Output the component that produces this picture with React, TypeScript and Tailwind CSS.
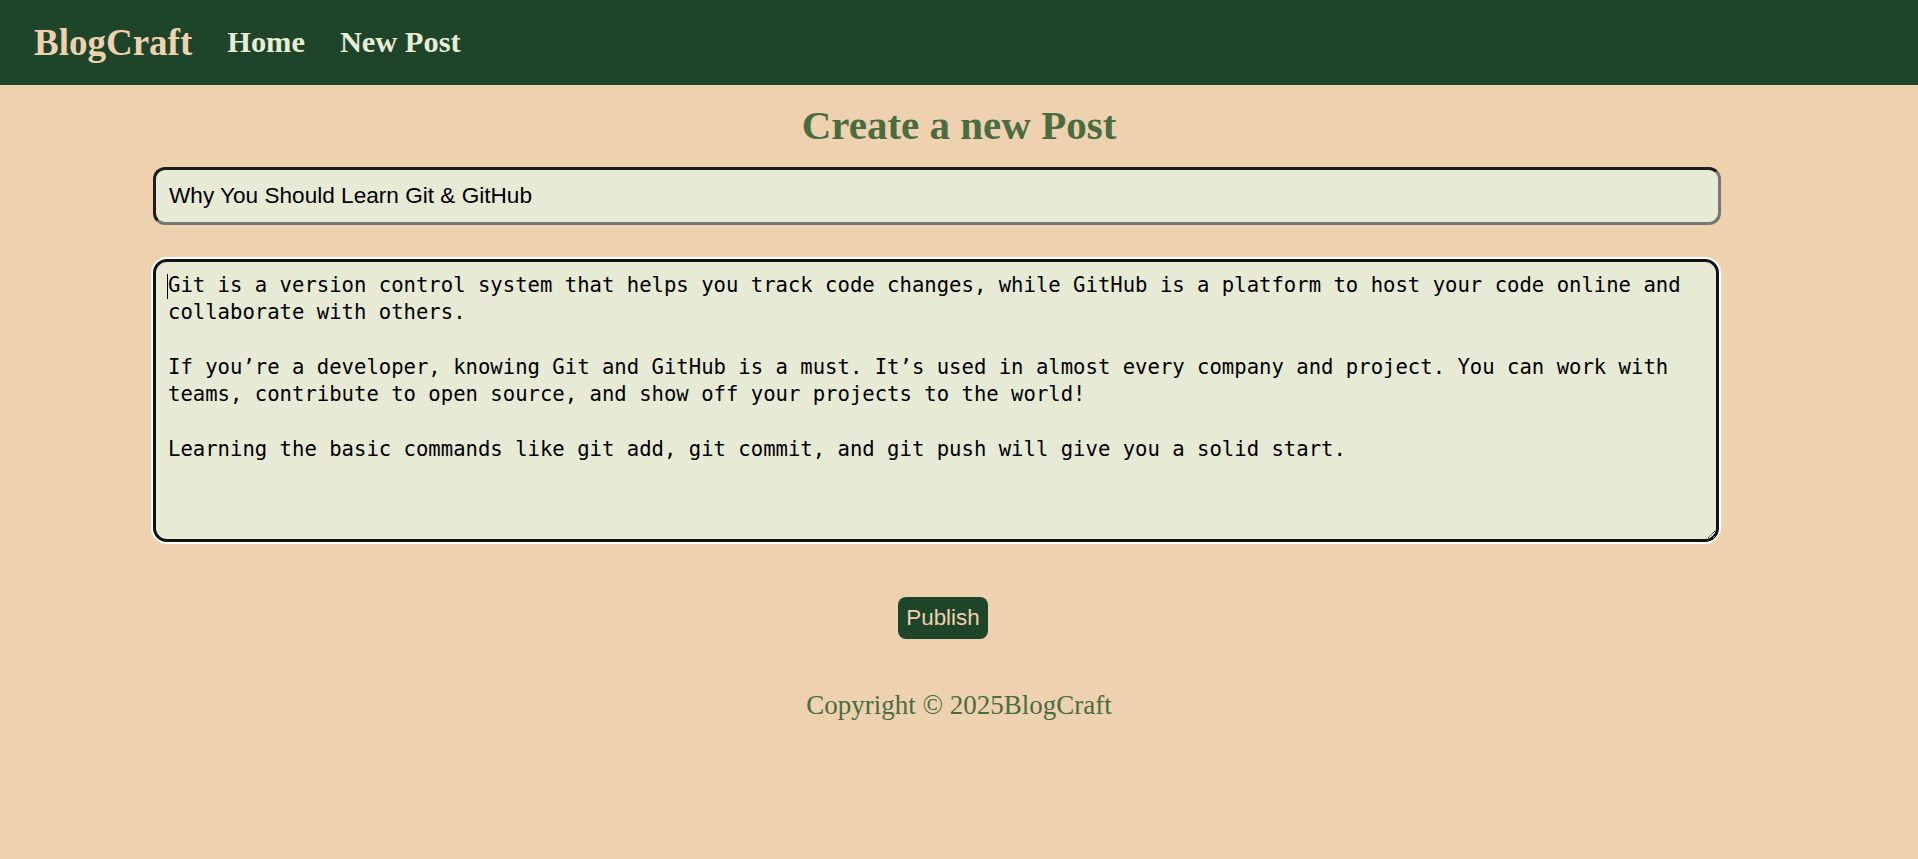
import React from "react";

const body = `Git is a version control system that helps you track code changes, while GitHub is a platform to host your code online and collaborate with others.

If you’re a developer, knowing Git and GitHub is a must. It’s used in almost every company and project. You can work with teams, contribute to open source, and show off your projects to the world!

Learning the basic commands like git add, git commit, and git push will give you a solid start.`;

export default function App() {
  return (
    <div className="h-[859px] w-full overflow-hidden bg-[#eed2af]">
      <header className="flex h-[85px] items-center gap-[35px] bg-[#1e4529] pl-[34px] font-['Liberation_Serif',serif] font-bold">
        <span className="text-[37px] text-[#eed2af]">BlogCraft</span>
        <a className="text-[30.4px] text-[#e8ecd8]">Home</a>
        <a className="text-[30.4px] text-[#e8ecd8]">New Post</a>
      </header>
      <main>
        <h1 className="mt-[17px] text-center font-['Liberation_Serif',serif] text-[41px] font-bold leading-[47px] text-[#4b6b40]">
          Create a new Post
        </h1>
        <div className="ml-[153px] mt-[18px] flex w-[1580px] flex-col">
          <input
            readOnly
            value="Why You Should Learn Git & GitHub"
            className="h-[58px] w-[1568px] rounded-[12px] border-[3px] border-b-[#767676] border-l-[#1e1e1e] border-r-[#767676] border-t-[#1e1e1e] bg-[#e7ead5] pb-[1px] pl-[13px] font-['Liberation_Sans',sans-serif] text-[22.6px] text-black outline-none"
          />
          <div className="relative mt-[34px] w-[1566px]">
            <textarea
              readOnly
              defaultValue={body}
              className="block h-[283px] w-[1566px] rounded-[14px] border-[3px] border-[#111111] bg-[#e7ead5] pl-[12px] pr-[12px] pt-[10px] font-['DejaVu_Sans_Mono',monospace] text-[20.6px] leading-[27.3px] text-black shadow-[0_0_0_2px_#ffffff] outline-none"
            />
            <span className="absolute left-[14px] top-[15px] h-[25px] w-[1px] bg-black" />
          </div>
          <div className="mt-[55px] flex justify-center">
            <button className="rounded-[8px] bg-[#1e4529] px-[8px] py-[8px] font-['Liberation_Sans',sans-serif] text-[22.4px] leading-[26px] text-[#eed2af]">
              Publish
            </button>
          </div>
        </div>
      </main>
      <footer className="mt-[51px] text-center font-['Liberation_Serif',serif] text-[27px] leading-[31px] text-[#4b6b40]">
        Copyright © 2025BlogCraft
      </footer>
    </div>
  );
}
